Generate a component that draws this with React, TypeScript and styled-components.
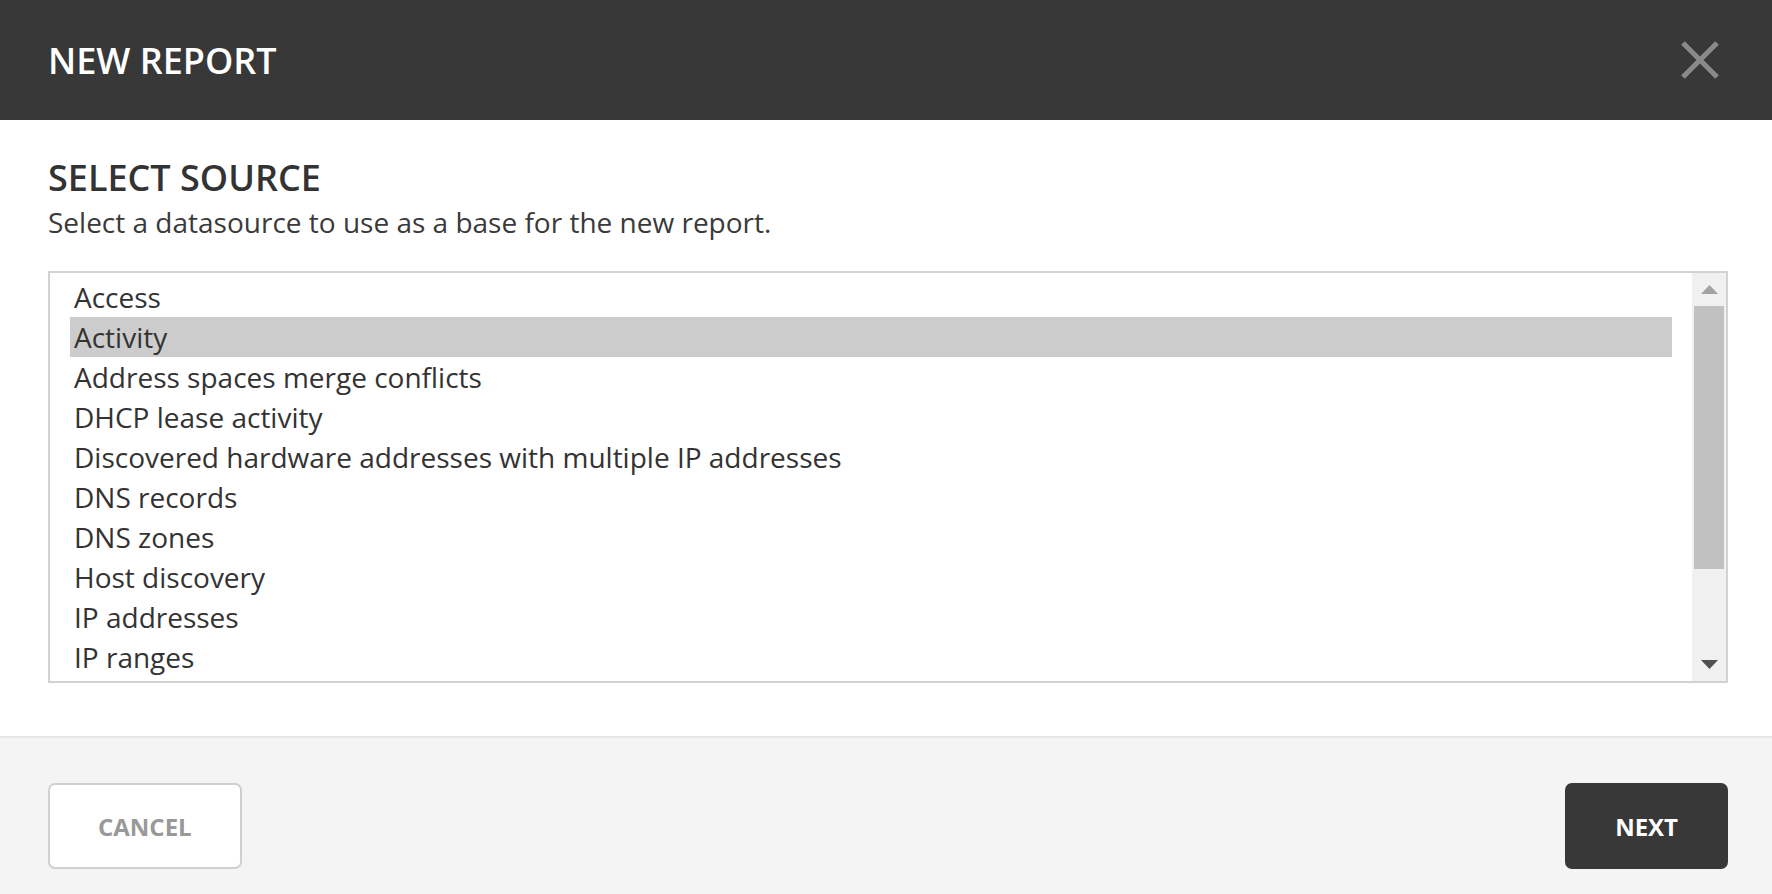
import * as React from 'react';
import styled, { createGlobalStyle } from 'styled-components';

const sources: string[] = [
  'Access',
  'Activity',
  'Address spaces merge conflicts',
  'DHCP lease activity',
  'Discovered hardware addresses with multiple IP addresses',
  'DNS records',
  'DNS zones',
  'Host discovery',
  'IP addresses',
  'IP ranges',
];

const GlobalStyle = createGlobalStyle`
  html, body {
    margin: 0;
    padding: 0;
    height: 100%;
    background: #f4f4f4;
    overflow: hidden;
  }
  body {
    font-family: 'Open Sans', 'Noto Sans', sans-serif;
    color: #333333;
  }
`;

const Dialog = styled.div`
  display: flex;
  flex-direction: column;
  width: 1772px;
  height: 894px;
`;

const Header = styled.header`
  display: flex;
  align-items: center;
  justify-content: space-between;
  height: 120px;
  padding: 0 53px 0 48px;
  background: #383838;
  box-sizing: border-box;
  flex-shrink: 0;
`;

const Title = styled.h1`
  margin: 0;
  font-size: 36px;
  font-weight: 600;
  line-height: 43px;
  color: #ffffff;
`;

const CloseButton = styled.button`
  display: flex;
  align-items: center;
  justify-content: center;
  width: 38px;
  height: 38px;
  padding: 0;
  border: none;
  background: transparent;
  cursor: pointer;
`;

const Body = styled.section`
  display: flex;
  flex-direction: column;
  padding: 36px 44px 53px 48px;
  background: #ffffff;
  border-bottom: 2px solid #e6e6e6;
`;

const Heading = styled.h2`
  margin: 0;
  font-size: 36px;
  font-weight: 600;
  line-height: 43px;
  color: #333333;
`;

const Subtitle = styled.p`
  margin: 7px 0 33px;
  font-size: 28px;
  line-height: 32px;
  color: #3a3a3a;
`;

const ListBox = styled.div`
  display: flex;
  height: 412px;
  border: 2px solid #d2d2d2;
  box-sizing: border-box;
  background: #ffffff;
`;

const Items = styled.ul`
  flex: 1;
  margin: 0;
  padding: 4px 20px;
  list-style: none;
  overflow: hidden;
`;

const Item = styled.li<{ $selected?: boolean }>`
  height: 40px;
  padding: 0 4px;
  font-size: 28px;
  line-height: 40px;
  color: #333333;
  white-space: nowrap;
  background: ${(p) => (p.$selected ? '#cccccc' : 'transparent')};
  cursor: default;
`;

const Scrollbar = styled.div`
  display: flex;
  flex-direction: column;
  width: 34px;
  background: #f0f0f0;
`;

const ScrollArrow = styled.div`
  display: flex;
  align-items: center;
  justify-content: center;
  height: 33px;
  flex-shrink: 0;
`;

const Thumb = styled.div`
  height: 263px;
  margin: 0 2px;
  background: #c1c1c1;
`;

const Track = styled.div`
  flex: 1;
`;

const Footer = styled.footer`
  display: flex;
  justify-content: space-between;
  padding: 45px 44px 0 48px;
  background: #f4f4f4;
  flex: 1;
`;

const Button = styled.button<{ $primary?: boolean }>`
  height: 86px;
  padding: 0 48px;
  border-radius: 7px;
  border: 2px solid ${(p) => (p.$primary ? '#383838' : '#d0d0d0')};
  background: ${(p) => (p.$primary ? '#383838' : '#ffffff')};
  color: ${(p) => (p.$primary ? '#ffffff' : '#999999')};
  font-family: 'Open Sans', 'Noto Sans', sans-serif;
  font-size: 24px;
  font-weight: 700;
  cursor: pointer;
`;

const CloseIcon = () => (
  <svg width="38" height="38" viewBox="0 0 38 38">
    <path d="M2 2 L36 36 M36 2 L2 36" stroke="#8a8a8a" strokeWidth="5" />
  </svg>
);

const Arrow = ({ up, color }: { up?: boolean; color: string }) => (
  <svg width="17" height="9" viewBox="0 0 17 9">
    <polygon points={up ? '0,9 17,9 8.5,0' : '0,0 17,0 8.5,9'} fill={color} />
  </svg>
);

export default function App() {
  const [selected, setSelected] = React.useState('Activity');

  return (
    <>
      <GlobalStyle />
      <Dialog>
        <Header>
          <Title>NEW REPORT</Title>
          <CloseButton aria-label="Close">
            <CloseIcon />
          </CloseButton>
        </Header>
        <Body>
          <Heading>SELECT SOURCE</Heading>
          <Subtitle>Select a datasource to use as a base for the new report.</Subtitle>
          <ListBox>
            <Items>
              {sources.map((s) => (
                <Item key={s} $selected={s === selected} onClick={() => setSelected(s)}>
                  {s}
                </Item>
              ))}
            </Items>
            <Scrollbar>
              <ScrollArrow>
                <Arrow up color="#a3a3a3" />
              </ScrollArrow>
              <Thumb />
              <Track />
              <ScrollArrow>
                <Arrow color="#505050" />
              </ScrollArrow>
            </Scrollbar>
          </ListBox>
        </Body>
        <Footer>
          <Button>CANCEL</Button>
          <Button $primary>NEXT</Button>
        </Footer>
      </Dialog>
    </>
  );
}
